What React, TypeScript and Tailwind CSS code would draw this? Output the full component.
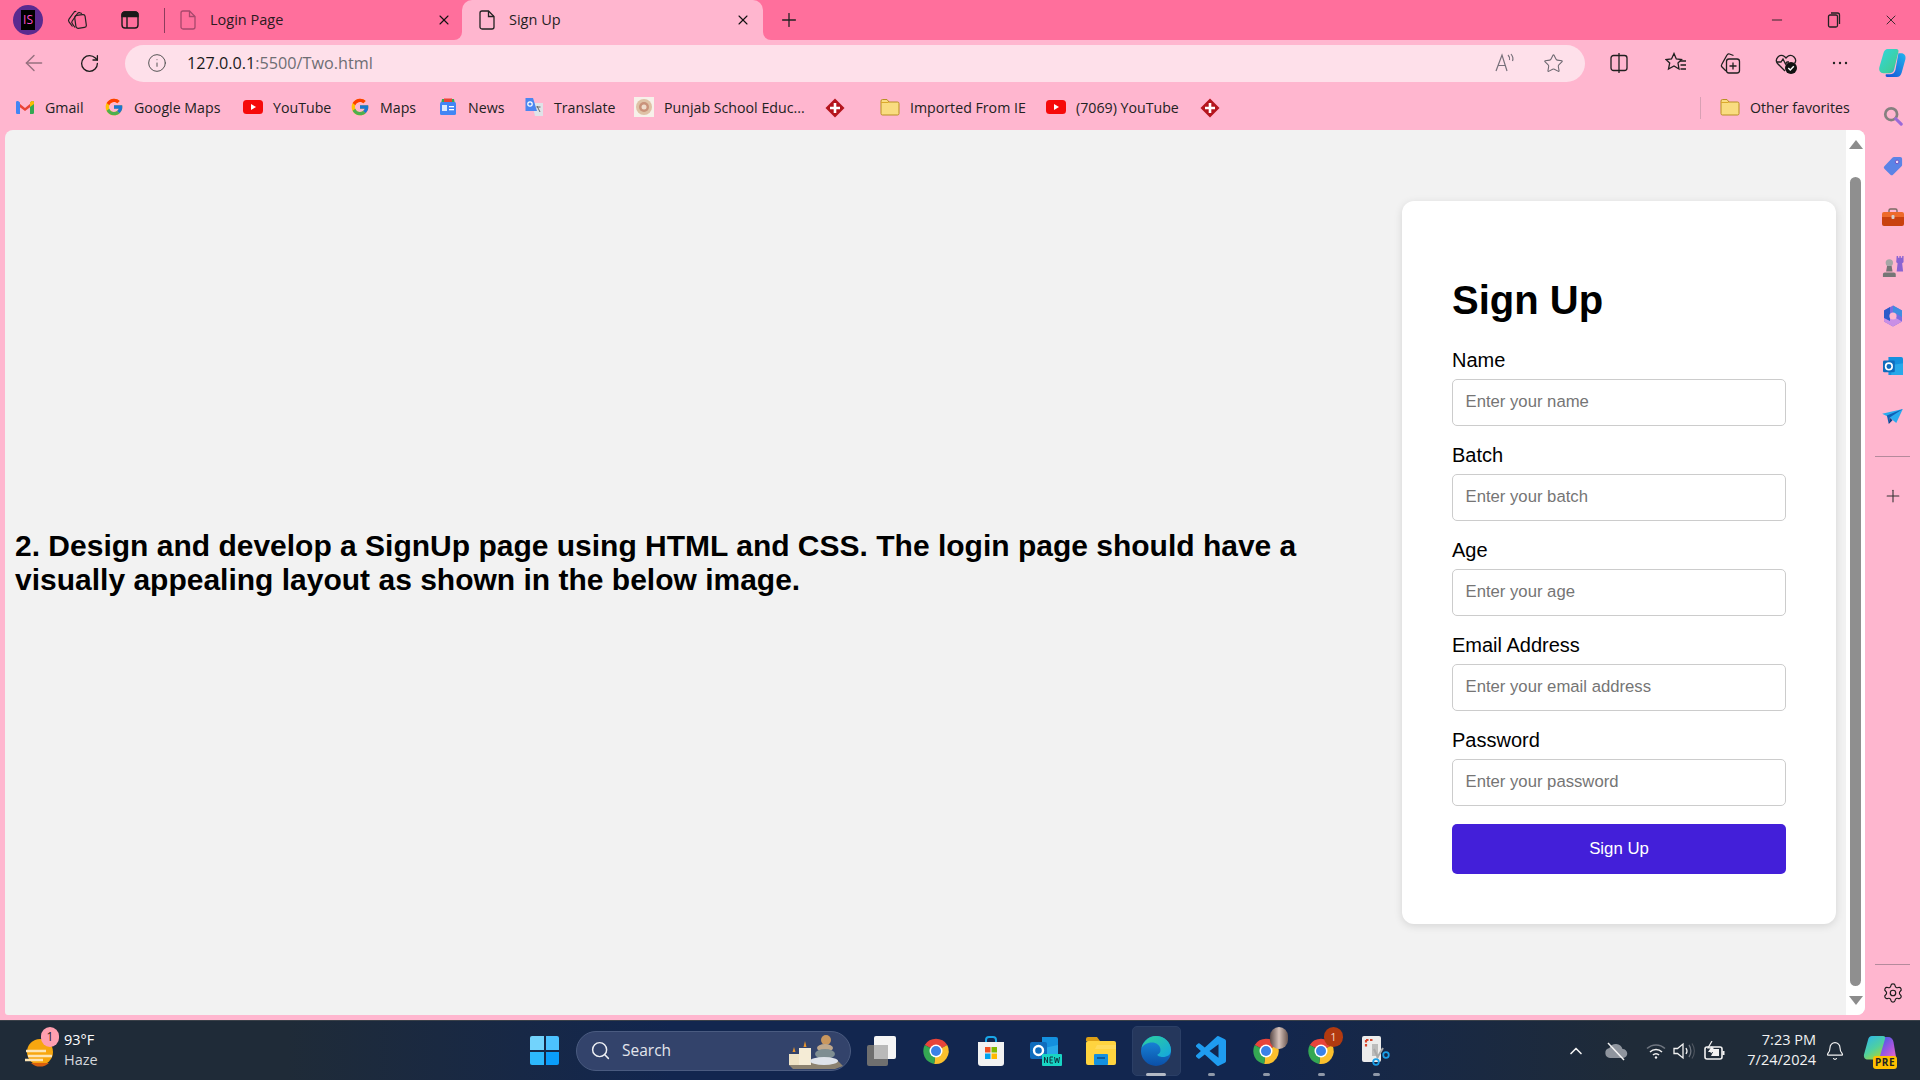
import React from "react";
import { ArrowLeft, RotateCw, Info, Plus, X, Minus, Settings, ChevronUp, Bell, Search, Star } from "lucide-react";
import { FcGoogle } from "react-icons/fc";

function DocIcon({ faded }: { faded?: boolean }) {
  return (
    <svg width="16" height="20" viewBox="0 0 16 20" fill="none" stroke={faded ? "#a8486c" : "#222"} strokeWidth="1.3">
      <path d="M3 1h6.5L15 6.5V17a2 2 0 0 1-2 2H3a2 2 0 0 1-2-2V3a2 2 0 0 1 2-2z" />
      <path d="M9.5 1v5.5H15" />
    </svg>
  );
}
function Gmail() {
  return (
    <svg width="18" height="14" viewBox="0 0 18 14">
      <path d="M1 1.500 9 8l8-6.500V5L9 11 1 5z" fill="#ea4335" />
      <path d="M0 2.500A1.500 1.500 0 0 1 2.500 1.300L4 2.500V14H1.300A1.300 1.300 0 0 1 0 12.700z" fill="#4285f4" />
      <path d="M14 2.500l1.500-1.200A1.500 1.500 0 0 1 18 2.500v10.200a1.300 1.300 0 0 1-1.300 1.300H14z" fill="#34a853" />
      <path d="M14 2.500l1.500-1.200A1.500 1.500 0 0 1 18 2.500V4l-4 3z" fill="#fbbc04" />
    </svg>
  );
}
function Yt() {
  return (
    <svg width="20" height="14" viewBox="0 0 20 14">
      <rect width="20" height="14" rx="3.5" fill="#f60a0a" />
      <path d="M8 4l5 3-5 3z" fill="#fff" />
    </svg>
  );
}
function News() {
  return (
    <svg width="18" height="18" viewBox="0 0 18 18">
      <path d="M3 1h12l1 5H2z" fill="#34a853" />
      <rect x="5" y="0.5" width="8" height="4" fill="#ea4335" />
      <rect x="1" y="4" width="16" height="13" rx="1.5" fill="#4285f4" />
      <rect x="3" y="7" width="5" height="6" fill="#dce9fb" />
      <rect x="10" y="8" width="5" height="1.3" fill="#fff" />
      <rect x="10" y="11" width="5" height="1.3" fill="#fff" />
    </svg>
  );
}
function Translate() {
  return (
    <svg width="20" height="20" viewBox="0 0 20 20">
      <path d="M8 6h11v13H11z" fill="#dfe3e8" />
      <path d="M13 9l3 6M16.5 10h-4" stroke="#666" strokeWidth="1" fill="none" />
      <path d="M1.5 1H9l4 13H1.5z" fill="#4a86f0" />
      <circle cx="6" cy="7" r="2.2" fill="none" stroke="#fff" strokeWidth="1.2" />
    </svg>
  );
}
function Punjab() {
  return (
    <svg width="20" height="20" viewBox="0 0 20 20">
      <rect width="20" height="20" fill="#f7f1ea" />
      <circle cx="10" cy="10" r="8" fill="#dfc2a6" />
      <circle cx="10" cy="10" r="5" fill="#c9927a" />
      <circle cx="10" cy="10" r="2.5" fill="#efdccb" />
    </svg>
  );
}
function Diamond() {
  return (
    <svg width="20" height="20" viewBox="0 0 20 20">
      <path d="M10 0.5 19.5 10 10 19.5 0.5 10z" fill="#b4151d" />
      <path d="M10 5v10M5 10h10" stroke="#fff" strokeWidth="2.6" />
    </svg>
  );
}
function Folder() {
  return (
    <svg width="20" height="18" viewBox="0 0 20 18">
      <path d="M1 3a1.5 1.5 0 0 1 1.5-1.5H7L9 4h8.5A1.5 1.5 0 0 1 19 5.5v10a1.5 1.5 0 0 1-1.5 1.5h-15A1.5 1.5 0 0 1 1 15.5z" fill="#f9dc80" stroke="#b98f22" strokeWidth="1" />
      <path d="M1 5h7L9.5 4H1z" fill="#dba92c" />
    </svg>
  );
}
function Bm({ icon, label, className }: { icon: React.ReactNode; label?: string; className: string }) {
  return (
    <div className={"flex items-center shrink-0 " + className}>
      <div className="flex w-[20px] justify-center shrink-0">{icon}</div>
      {label && <span className="ml-[10px] whitespace-nowrap">{label}</span>}
    </div>
  );
}
function Copilot({ size = 28 }: { size?: number }) {
  return (
    <svg width={size} height={size} viewBox="0 0 28 28">
      <defs>
        <linearGradient id="cpa" x1="0" y1="0" x2="1" y2="1"><stop offset="0" stopColor="#2fd6e0" /><stop offset="0.7" stopColor="#3ecf9e" /><stop offset="1" stopColor="#2f8fe0" /></linearGradient>
        <linearGradient id="cpb" x1="0" y1="1" x2="1" y2="0"><stop offset="0" stopColor="#1450d6" /><stop offset="1" stopColor="#22b4ee" /></linearGradient>
      </defs>
      <path d="M10 1h8c1.500 0 2.300 1 2 2.500L16 20c-.6 2.300-2 3.500-4.500 3.500H6C3 23.500 1.500 21 2.200 18L6 5C6.600 2.500 8 1 10 1z" fill="url(#cpa)" />
      <path d="M20 5h2.500c3 0 4.700 2.500 4 5.500L23 23c-.7 2.500-2.300 4-4.500 4h-9c-1.300 0-1.800-1-1.200-2.500H12c2.800 0 4.500-1.500 5.200-4z" fill="url(#cpb)" />
    </svg>
  );
}
function ChromeIcon() {
  return (
    <svg width="30" height="30" viewBox="0 0 24 24">
      <path d="M12 12 3 7.200A10.500 10.500 0 0 1 21 7.200z" fill="#e8443a" />
      <path d="M12 12 21 7.200A10.500 10.500 0 0 1 10.500 22.400z" fill="#fbc02d" />
      <path d="M12 12 10.500 22.400A10.500 10.500 0 0 1 3 7.200z" fill="#34a853" />
      <circle cx="12" cy="12" r="5.200" fill="#fff" />
      <circle cx="12" cy="12" r="4" fill="#3b82e8" />
    </svg>
  );
}
function Slot({ children, bar, active }: { children: React.ReactNode; bar?: boolean; active?: boolean }) {
  return (
    <div className={"relative flex h-[50px] w-[55px] shrink-0 items-center justify-center"}>
      {active && <div className="absolute left-[3px] top-0 h-[50px] w-[49px] rounded-[5px] border border-[#2b3f66] bg-[#25375c]" />}
      <div className="relative flex items-center justify-center">{children}</div>
      {bar && <div className={active ? "absolute bottom-[0px] h-[3px] w-[20px] rounded-full bg-[#b4bac6]" : "absolute bottom-[0px] h-[3px] w-[7px] rounded-full bg-[#8f98a8]"} />}
    </div>
  );
}
function Field({ label, placeholder }: { label: string; placeholder: string }) {
  return (
    <div className="mb-[18px]">
      <label className="mb-[7px] block text-[20px] leading-[23px] text-black">{label}</label>
      <input placeholder={placeholder} className="block h-[47px] w-full rounded-[5px] border-[1.5px] border-[#cccccc] bg-white pb-[2px] pl-[12.5px] pr-[12px] text-[16.7px] outline-none placeholder:text-[#757575]" />
    </div>
  );
}

export default function App() {
  return (
    <div className="flex h-[1080px] w-[1920px] flex-col overflow-hidden bg-[#ffb6cf] font-['Open_Sans',sans-serif] text-[#1f1f1f]">
      {/* tab strip */}
      <div className="flex h-[40px] shrink-0 items-center bg-[#ff6f9c]">
        <div className="ml-[13px] flex h-[30px] w-[30px] shrink-0 items-center justify-center rounded-full bg-[#5a2a8f]">
          <div className="flex h-[20px] w-[14px] items-center justify-center bg-black text-[12px] leading-none text-[#ff4fd0]">IS</div>
        </div>
        <svg className="ml-[24px]" width="20" height="20" viewBox="0 0 20 20" fill="none" stroke="#222" strokeWidth="1.2">
          <rect x="8.200" y="5" width="10.500" height="13" rx="2.200" transform="rotate(-8 13 11)" />
          <path d="M8 17.500 5.200 13.500a2.200 2.200 0 0 1 0-2.500L10.500 3.500a2 2 0 0 1 2.200-.8l2.300.8" />
          <path d="M5.500 16.500 2 11.800a2.200 2.200 0 0 1 0-2.600L6.800 2.500a2 2 0 0 1 2.500-.8" />
        </svg>
        <svg className="ml-[34px]" width="18" height="18" viewBox="0 0 18 18" fill="none" stroke="#1a1a1a" strokeWidth="1.4">
          <rect x="1" y="1" width="16" height="16" rx="3" />
          <path d="M1 4a3 3 0 0 1 3-3h10a3 3 0 0 1 3 3v1.500H1z" fill="#1a1a1a" />
          <path d="M6 5.500V17" />
        </svg>
        <div className="ml-[25px] h-[25px] w-px bg-[#8c3d5c]" />
        <div className="flex h-[40px] w-[297px] items-center pl-[15px] text-[14.5px]">
          <DocIcon faded />
          <span className="mb-[1px] ml-[14px] text-[#2a1a20]">Login Page</span>
          <X className="ml-auto mr-[10px]" size={16} strokeWidth={1.6} color="#111" />
        </div>
        <div className="relative flex h-[40px] w-[301px] items-center rounded-t-[10px] bg-[#ffb6cf] pl-[17px] text-[14.5px]">
          <div className="absolute bottom-0 left-[-8px] h-[8px] w-[8px] bg-[#ffb6cf]"><div className="h-[8px] w-[8px] rounded-br-[8px] bg-[#ff6f9c]" /></div>
          <div className="absolute bottom-0 right-[-8px] h-[8px] w-[8px] bg-[#ffb6cf]"><div className="h-[8px] w-[8px] rounded-bl-[8px] bg-[#ff6f9c]" /></div>
          <DocIcon />
          <span className="mb-[1px] ml-[14px]">Sign Up</span>
          <X className="ml-auto mr-[12px]" size={16} strokeWidth={1.6} color="#111" />
        </div>
        <Plus className="ml-[15px]" size={22} strokeWidth={1.4} color="#222" />
        <Minus className="ml-auto" size={16} strokeWidth={1.4} color="#222" />
        <svg className="ml-[42px]" width="14" height="16" viewBox="0 0 14 16" fill="none" stroke="#222" strokeWidth="1.3">
          <rect x="1.500" y="3" width="9" height="12" rx="1.500" />
          <path d="M4 1h6.500A2 2 0 0 1 12.500 3v9" />
        </svg>
        <X className="ml-[42px] mr-[21px]" size={16} strokeWidth={1.3} color="#222" />
      </div>

      {/* toolbar */}
      <div className="flex h-[45px] shrink-0 items-center pt-[1px]">
        <ArrowLeft className="ml-[21px]" size={26} strokeWidth={1.3} color="#96707f" />
        <RotateCw className="ml-[32px]" size={21} strokeWidth={1.5} color="#1c1c1c" />
        <div className="ml-[25px] flex h-[37px] w-[1460px] items-center rounded-full bg-[#fee0ea]">
          <Info className="ml-[22px]" size={20} strokeWidth={1.2} color="#555" />
          <span className="ml-[20px] text-[16.2px] leading-none text-[#1a1a1a]">127.0.0.1<span className="text-[#6e6e74]">:5500/Two.html</span></span>
          <svg className="ml-auto" width="22" height="22" viewBox="0 0 22 22" fill="none" stroke="#77707a" strokeWidth="1.2">
            <path d="M2 19 8 3l5 16M4 13.500h7.500" />
            <path d="M14 3c1.500 1.500 2 3 1.500 5M17 2c2 2.500 2.500 4.500 1.500 7" />
          </svg>
          <Star className="ml-[27px] mr-[21px]" size={21} strokeWidth={1.2} color="#6c6870" />
        </div>
        <svg className="ml-[24px]" width="20" height="20" viewBox="0 0 20 20" fill="none" stroke="#1f1f1f" strokeWidth="1.3">
          <rect x="2" y="2.500" width="16" height="15" rx="2.500" />
          <path d="M10 0v20" />
        </svg>
        <svg className="ml-[36px]" width="22" height="22" viewBox="0 0 22 22" fill="none" stroke="#1f1f1f" strokeWidth="1.3">
          <path d="M9 1.500l2.300 5.500 5.200.5-3.500 3.500 1 6-5-3-5.500 3 1.200-6L1 7.500 6.500 7z" />
          <path d="M15 9h6M15.500 13h5.500M15.500 17h5.500" />
        </svg>
        <svg className="ml-[32px]" width="22" height="22" viewBox="0 0 22 22" fill="none" stroke="#1f1f1f" strokeWidth="1.3">
          <rect x="7.500" y="7" width="13" height="14" rx="2.500" />
          <path d="M14 10.500v7M10.500 14h7" />
          <path d="M7 19 3 15a2 2 0 0 1-.3-2.500L8 3a2 2 0 0 1 2.500-1l4 1.500" />
        </svg>
        <svg className="ml-[33px]" width="24" height="24" viewBox="0 0 24 24" fill="none" stroke="#1f1f1f" strokeWidth="1.3">
          <path d="M11 20 3.500 12.500a5 5 0 0 1 7-7l1.500 1.500 1.500-1.500a5 5 0 0 1 7 7" />
          <path d="M3 11h4l2-3 2.500 5 1.500-2h2" />
          <circle cx="17" cy="17" r="6" fill="#111" stroke="none" />
          <path d="M14.300 17l2 2 3.500-3.800" stroke="#fff" strokeWidth="1.400" />
        </svg>
        <svg className="ml-[34px]" width="16" height="4" viewBox="0 0 16 4" fill="#222"><circle cx="2" cy="2" r="1.200" /><circle cx="8" cy="2" r="1.200" /><circle cx="14" cy="2" r="1.200" /></svg>
        <div className="ml-[29px]"><Copilot size={30} /></div>
      </div>

      {/* bookmarks + page + side rail */}
      <div className="flex h-[935px] shrink-0">
        <div className="flex w-[1865px] shrink-0 flex-col">
          <div className="flex h-[45px] shrink-0 items-center pl-[15px] text-[14.2px] text-[#222]">
            <Bm className="w-[89px]" icon={<Gmail />} label="Gmail" />
            <Bm className="w-[139px]" icon={<FcGoogle size={20} />} label="Google Maps" />
            <Bm className="w-[107px]" icon={<Yt />} label="YouTube" />
            <Bm className="w-[88px]" icon={<FcGoogle size={20} />} label="Maps" />
            <Bm className="w-[86px]" icon={<News />} label="News" />
            <Bm className="w-[110px]" icon={<Translate />} label="Translate" />
            <Bm className="w-[191px]" icon={<Punjab />} label="Punjab School Educ..." />
            <Bm className="w-[55px]" icon={<Diamond />} />
            <Bm className="w-[166px]" icon={<Folder />} label="Imported From IE" />
            <Bm className="w-[154px]" icon={<Yt />} label="(7069) YouTube" />
            <Bm className="w-[60px]" icon={<Diamond />} />
            <div className="ml-[440px] h-[22px] w-px bg-[#d8a0b4]" />
            <Bm className="ml-[19px] w-[130px]" icon={<Folder />} label="Other favorites" />
          </div>
          <div className="ml-[5px] flex h-[885px] shrink-0 overflow-hidden rounded-tl-[8px] rounded-r-[8px] rounded-bl-[3px] bg-[#f2f2f2] font-['Liberation_Sans',sans-serif] text-black">
            <div className="flex flex-1 items-start justify-between pl-[10px] pr-[10px] pt-[71px]">
              <div className="flex h-[723px] w-[1340px] items-center pt-[1px]">
                <p className="text-[30px] font-bold leading-[34px]">
                  2. Design and develop a SignUp page using HTML and CSS. The login page should have a visually appealing layout as shown in the below image.
                </p>
              </div>
              <form className="h-[723px] w-[434px] rounded-[12px] bg-white px-[50px] pt-[50px] shadow-[0_2px_8px_rgba(0,0,0,0.12)]">
                <h2 className="mb-[26px] mt-[26px] text-[40px] font-bold leading-[46px]">Sign Up</h2>
                <Field label="Name" placeholder="Enter your name" />
                <Field label="Batch" placeholder="Enter your batch" />
                <Field label="Age" placeholder="Enter your age" />
                <Field label="Email Address" placeholder="Enter your email address" />
                <Field label="Password" placeholder="Enter your password" />
                <button type="button" className="block h-[50px] w-full rounded-[5px] bg-[#431fd9] text-[16.8px] text-white">Sign Up</button>
              </form>
            </div>
            <div className="flex w-[19px] shrink-0 flex-col items-center bg-white pt-[10px]">
              <div className="h-0 w-0 border-x-[7px] border-b-[9px] border-x-transparent border-b-[#8c8c8c]" />
              <div className="mt-[28px] h-[809px] w-[11px] rounded-full bg-[#8f8f8f]" />
              <div className="mt-[10px] h-0 w-0 border-x-[7px] border-t-[9px] border-x-transparent border-t-[#8c8c8c]" />
            </div>
          </div>
          <div className="h-[5px] shrink-0" />
        </div>

        {/* side rail */}
        <div className="flex w-[55px] shrink-0 flex-col items-center">
          <svg className="mt-[21px]" width="20" height="20" viewBox="0 0 22 22" fill="none">
            <circle cx="9" cy="9" r="6.500" stroke="#85807f" strokeWidth="3" />
            <path d="M14 14l6 6" stroke="#9a6ad8" strokeWidth="3.400" strokeLinecap="round" />
          </svg>
          <svg className="mt-[30px]" width="20" height="20" viewBox="0 0 22 22">
            <path d="M12 1h7a2 2 0 0 1 2 2v7a2 2 0 0 1-.6 1.400L11 20.500a2 2 0 0 1-2.800 0L1.500 14a2 2 0 0 1 0-2.800L10.600 1.600A2 2 0 0 1 12 1z" fill="#5b83e6" />
            <circle cx="15.500" cy="6.500" r="2" fill="#ecd9f4" stroke="#6b4bc0" />
          </svg>
          <svg className="mt-[32px]" width="22" height="18" viewBox="0 0 22 18">
            <path d="M7 5V2.500A1.500 1.500 0 0 1 8.500 1h5A1.500 1.500 0 0 1 15 2.500V5" stroke="#7c6a64" strokeWidth="1.400" fill="none" />
            <path d="M0 6a2 2 0 0 1 2-2h18a2 2 0 0 1 2 2v3H0z" fill="#ee6a2b" />
            <path d="M0 9h22v7a2 2 0 0 1-2 2H2a2 2 0 0 1-2-2z" fill="#c9410f" />
            <rect x="9.500" y="7" width="3" height="4" rx="1" fill="#d8d0cc" />
          </svg>
          <svg className="mt-[29px]" width="22" height="22" viewBox="0 0 24 24">
            <path d="M16 1h1.500v2H19V1h1.500v2H22V1h1.500v7l-1.500 1 1 9h-7l1-9-1.500-1z" fill="#8a63d2" />
            <circle cx="8" cy="8.500" r="4" fill="#a6a6a6" />
            <path d="M5.500 12h5l1 6h-7zM1 21a2 2 0 0 1 2-2h10a2 2 0 0 1 2 2v3H1z" fill="#767676" />
          </svg>
          <svg className="mt-[28px]" width="22" height="22" viewBox="0 0 22 22">
            <path d="M11 0.500 20 5.500V16.500L11 21.500 2 16.500V5.500z" fill="#7b6ce0" />
            <path d="M11 0.500 20 5.500V12L14 8.500H11z" fill="#3f8de0" />
            <path d="M2 10v6.500L11 21.500 20 16.500 14 13H8z" fill="#c98fe6" />
            <path d="M2 5.500 8 2v14l-6-3z" fill="#2b5bc9" />
            <circle cx="11" cy="11" r="3.600" fill="#ffb6cf" />
          </svg>
          <svg className="mt-[29px]" width="20" height="20" viewBox="0 0 22 22">
            <path d="M6 1h14a2 2 0 0 1 2 2v17a1 1 0 0 1-1 1H6z" fill="#1490df" />
            <path d="M10 10l12-2v13H9z" fill="#28a8ea" />
            <rect x="0" y="5" width="13" height="13" rx="1.500" fill="#0f6cbd" />
            <circle cx="6.500" cy="11.500" r="3.600" fill="none" stroke="#fff" strokeWidth="1.800" />
          </svg>
          <svg className="mt-[33px]" width="21" height="15" viewBox="0 0 22 16">
            <path d="M0 5 22 0 15 15 8 9z" fill="#29aaee" />
            <path d="M22 0 8 9 7 16 5 7z" fill="#0f5fb5" />
            <path d="M8 9l-1 7 4-4z" fill="#0a3d84" />
          </svg>
          <div className="mt-[32px] h-px w-[35px] bg-[#b58a9c]" />
          <Plus className="mt-[29px]" size={20} strokeWidth={1.3} color="#333" />
          <div className="mt-[458px] h-px w-[35px] bg-[#b58a9c]" />
          <Settings className="mt-[17px]" size={22} strokeWidth={1.3} color="#1c1c1c" />
        </div>
      </div>

      {/* taskbar */}
      <div className="flex h-[60px] shrink-0 items-center border-t border-[#3a4048] bg-[linear-gradient(90deg,#1f2b38_0%,#1f2b38_15%,#12264f_35%,#12264f_65%,#1f2b38_85%,#1f2b38_100%)] text-white">
        <div className="flex w-[530px] shrink-0 items-center pl-[25px]">
          <div className="relative h-[32px] w-[28px] shrink-0">
            <svg width="28" height="32" viewBox="0 0 28 32">
              <circle cx="15" cy="17" r="13" fill="#f7a60f" />
              <path d="M6 28a13 13 0 0 0 18 0z" fill="#d95f0e" />
              <path d="M1 16h20M3 21h24M0 25h18" stroke="#fde5b5" strokeWidth="2.400" />
            </svg>
            <div className="absolute right-[-6px] top-[-8px] flex h-[20px] w-[18px] items-center justify-center rounded-full bg-[#ff9fb0] text-[12px] leading-none text-[#222]">1</div>
          </div>
          <div className="ml-[11px] flex flex-col pb-[2px] text-[14.5px] leading-[20px]">
            <span>93°F</span>
            <span className="text-[#d4d7dc]">Haze</span>
          </div>
        </div>
        <div className="grid h-[29px] w-[29px] shrink-0 grid-cols-2 gap-[2px]">
          <div className="rounded-tl-[2px] bg-[#72d3fc]" />
          <div className="rounded-tr-[2px] bg-[#4cc2ff]" />
          <div className="rounded-bl-[2px] bg-[#2db8fc]" />
          <div className="rounded-br-[2px] bg-[#0a9dfa]" />
        </div>
        <div className="ml-[17px] flex h-[40px] w-[275px] shrink-0 items-center rounded-full border border-[#4a5b80] bg-[#33436b]">
          <Search className="ml-[13px]" size={21} strokeWidth={1.7} color="#eef0f4" />
          <span className="ml-[11px] text-[15.5px] text-[#e3e6ec]">Search</span>
          <svg className="ml-auto mr-[5px]" width="58" height="36" viewBox="0 0 58 36">
            <path d="M2 32 50 27l6 6-8 3H6z" fill="#8c8270" />
            <rect x="2" y="21" width="10" height="11" fill="#efe3c6" />
            <rect x="12" y="15" width="12" height="17" fill="#f5ecd6" />
            <path d="M7 14l1.500 5H5.500zM18 8l1.500 6h-3z" fill="#e8952e" />
            <circle cx="39" cy="7" r="5" fill="#c9975e" />
            <ellipse cx="38" cy="15" rx="8" ry="4" fill="#c0a88c" />
            <ellipse cx="38" cy="21" rx="10" ry="5" fill="#7f8e92" />
            <ellipse cx="37" cy="28" rx="14" ry="4" fill="#dfe3ea" />
          </svg>
        </div>
        <svg className="ml-[16px] shrink-0" width="29" height="30" viewBox="0 0 29 30">
          <rect x="0" y="9" width="21" height="21" rx="2" fill="#6f6f6f" />
          <rect x="7" y="0" width="22" height="23" rx="2" fill="#f5f5f5" />
          <path d="M7 9h14v14H7z" fill="#b9b9b9" />
        </svg>
        <div className="ml-[12.5px] flex shrink-0 items-center">
          <Slot><ChromeIcon /></Slot>
          <Slot>
            <svg width="28" height="30" viewBox="0 0 28 30">
              <path d="M9 7V4a3 3 0 0 1 3-3h4a3 3 0 0 1 3 3v3" fill="none" stroke="#19a6e8" strokeWidth="2" />
              <path d="M1 6h26v21a3 3 0 0 1-3 3H4a3 3 0 0 1-3-3z" fill="#f2f2f2" />
              <rect x="8" y="11" width="5.500" height="5.500" fill="#f25022" />
              <rect x="14.500" y="11" width="5.500" height="5.500" fill="#7fba00" />
              <rect x="8" y="17.500" width="5.500" height="5.500" fill="#00a4ef" />
              <rect x="14.500" y="17.500" width="5.500" height="5.500" fill="#ffb900" />
            </svg>
          </Slot>
          <Slot>
            <svg width="32" height="30" viewBox="0 0 32 30">
              <path d="M12 1h14a2 2 0 0 1 2 2v20H12z" fill="#1490df" />
              <path d="M14 12l14-3v14H14z" fill="#28a8ea" />
              <rect x="0" y="6" width="17" height="17" rx="2" fill="#0f6cbd" />
              <circle cx="8.500" cy="14.500" r="4.500" fill="none" stroke="#fff" strokeWidth="2.400" />
              <rect x="12" y="18" width="20" height="12" rx="1" fill="#18d5c4" />
              <path d="M14.500 27v-6l3 6v-6M23 21h-3v6h3M20 24h2.500M24.500 21l1 6 1.500-5 1.500 5 1-6" fill="none" stroke="#0d2b3a" strokeWidth="0.900" />
            </svg>
          </Slot>
          <Slot>
            <svg width="32" height="28" viewBox="0 0 32 28">
              <path d="M1 2a2 2 0 0 1 2-2h9l3 4H1z" fill="#dc9f16" />
              <rect x="1" y="4" width="30" height="24" rx="2" fill="#ffd43f" />
              <path d="M1 12h30V8H12l-2 4z" fill="#ffe27a" opacity="0.5" />
              <rect x="9" y="17" width="14" height="11" rx="1" fill="#1490df" />
              <rect x="12" y="20" width="8" height="2" fill="#0c5e9e" />
            </svg>
          </Slot>
          <Slot active bar>
            <svg width="32" height="32" viewBox="0 0 32 32">
              <defs>
                <linearGradient id="edgea" x1="0" y1="0" x2="1" y2="1"><stop offset="0" stopColor="#2ed39a" /><stop offset="1" stopColor="#14a4e0" /></linearGradient>
                <linearGradient id="edgeb" x1="0" y1="0" x2="0" y2="1"><stop offset="0" stopColor="#1a8fe0" /><stop offset="1" stopColor="#0b4fa8" /></linearGradient>
              </defs>
              <circle cx="16" cy="16" r="15" fill="url(#edgeb)" />
              <path d="M1.500 13C3.500 6 9 1 16 1c8 0 15 6 15 14 0 5-4 7-8 7-3 0-6-1-5.500-2.500 2-1 3-2.500 3-4.500C20.500 10 16 7.500 12 7.500 7 7.500 3 10 1.500 13z" fill="url(#edgea)" />
            </svg>
          </Slot>
          <Slot bar>
            <svg width="30" height="30" viewBox="0 0 24 24" fill="#1f9cf0">
              <path d="M23.150 2.587L18.210.21a1.494 1.494 0 0 0-1.705.29l-9.460 8.630-4.120-3.128a.999.999 0 0 0-1.276.057L.327 7.261A1 1 0 0 0 .326 8.740L3.899 12 .326 15.260a1 1 0 0 0 .001 1.479L1.650 17.940a.999.999 0 0 0 1.276.057l4.120-3.128 9.460 8.630a1.492 1.492 0 0 0 1.704.29l4.942-2.377A1.500 1.500 0 0 0 24 20.060V3.939a1.500 1.500 0 0 0-.850-1.352zm-5.146 14.861L10.826 12l7.178-5.448v10.896z" />
            </svg>
          </Slot>
          <Slot bar>
            <div className="relative">
              <ChromeIcon />
              <div className="absolute right-[-7px] top-[-9px] h-[22px] w-[18px] rounded-full bg-[linear-gradient(90deg,#5a4a48,#d8c4bc,#6a5650)]" />
            </div>
          </Slot>
          <Slot bar>
            <div className="relative">
              <ChromeIcon />
              <div className="absolute right-[-7px] top-[-9px] flex h-[20px] w-[19px] items-center justify-center rounded-full bg-[#b23a10] text-[11px] leading-none text-[#f5d5c5]">1</div>
            </div>
          </Slot>
          <Slot bar>
            <svg width="30" height="32" viewBox="0 0 30 32">
              <rect x="1" y="1" width="19" height="26" rx="2" fill="#ececec" />
              <path d="M5 5h8M5 5v8" stroke="#d8432b" strokeWidth="2.200" strokeDasharray="2.500 1.500" />
              <rect x="11" y="9" width="6" height="12" fill="#bcbcbc" />
              <path d="M13 14l4 9M22 13l-6 10" stroke="#a9a9a9" strokeWidth="2" />
              <circle cx="15" cy="27" r="2.800" fill="none" stroke="#1a9fe8" strokeWidth="1.800" />
              <circle cx="25" cy="20" r="2.800" fill="none" stroke="#1a9fe8" strokeWidth="1.800" />
            </svg>
          </Slot>
        </div>
        <ChevronUp className="ml-[162.5px] shrink-0" size={20} strokeWidth={2} color="#f2f2f2" />
        <svg className="ml-[18px] shrink-0" width="24" height="20" viewBox="0 0 24 20">
          <path d="M6 17a5 5 0 0 1-.6-9.900A7 7 0 0 1 18.500 8a4.500 4.500 0 0 1 .5 9z" fill="#8f959e" />
          <path d="M4 2l16 17" stroke="#f4f4f4" strokeWidth="1.500" />
        </svg>
        <svg className="ml-[18px] shrink-0" width="20" height="16" viewBox="0 0 20 16" fill="none" stroke="#f2f2f2" strokeWidth="1.500">
          <path d="M1 5.500a13 13 0 0 1 18 0" stroke="#6f7680" />
          <path d="M4 9a8.500 8.500 0 0 1 12 0" />
          <path d="M7 12a4 4 0 0 1 6 0" />
          <circle cx="10" cy="14.500" r="1.200" fill="#f2f2f2" stroke="none" />
        </svg>
        <svg className="ml-[7px] shrink-0" width="22" height="18" viewBox="0 0 22 18" fill="none" stroke="#f2f2f2" strokeWidth="1.300">
          <path d="M1 6.500h3.500L10 2v14l-5.500-4.500H1z" />
          <path d="M13 6c1.200 1.800 1.200 4.200 0 6" />
          <path d="M16 3c2.500 3.500 2.500 8.500 0 12" stroke="#6f7680" />
          <path d="M19 1.500c3 4.500 3 10.500 0 15" stroke="#4f5660" />
        </svg>
        <svg className="ml-[9px] shrink-0" width="22" height="20" viewBox="0 0 22 20" fill="none" stroke="#f2f2f2" strokeWidth="1.600">
          <rect x="1" y="6" width="17" height="12" rx="2" />
          <path d="M8 5 4 11h5l-2 4h8V8H9z" fill="#f2f2f2" stroke="none" />
          <path d="M19.500 10v4" strokeWidth="2" />
          <path d="M8 0 4 7h5l-2 5" stroke="#f2f2f2" strokeWidth="1.200" />
        </svg>
        <div className="ml-[21px] flex w-[69px] shrink-0 flex-col items-end whitespace-nowrap pb-[1px] text-[14.5px] leading-[20px] text-[#f2f2f2]">
          <span>7:23 PM</span>
          <span>7/24/2024</span>
        </div>
        <Bell className="ml-[9px] shrink-0" size={20} strokeWidth={1.4} color="#f2f2f2" />
        <div className="relative ml-[18px] h-[32px] w-[34px] shrink-0">
          <svg width="34" height="30" viewBox="0 0 34 30">
            <defs>
              <linearGradient id="cqa" x1="0" y1="0" x2="0.600" y2="1"><stop offset="0" stopColor="#2bb5f0" /><stop offset="0.6" stopColor="#4fd0a0" /><stop offset="1" stopColor="#a4d43a" /></linearGradient>
              <linearGradient id="cqb" x1="0" y1="0" x2="1" y2="1"><stop offset="0" stopColor="#2f5fe8" /><stop offset="0.6" stopColor="#a456e0" /><stop offset="1" stopColor="#e866c8" /></linearGradient>
            </defs>
            <path d="M20 2h5c3 0 5 2 5.500 5L33 22H16z" fill="url(#cqb)" />
            <path d="M9 1h11c2 0 2.500 1 2 3L17 21c-.5 2-2 3.500-4 3.500H5c-3 0-4.500-2-4-5L5 5c.5-2.500 2-4 4-4z" fill="url(#cqa)" />
          </svg>
          <div className="absolute bottom-[-2px] right-0 flex h-[13px] w-[24px] items-center justify-center rounded-[3px] bg-[#ffc000] text-[10px] font-bold leading-none tracking-[0.5px] text-[#222]">PRE</div>
        </div>
      </div>
    </div>
  );
}
